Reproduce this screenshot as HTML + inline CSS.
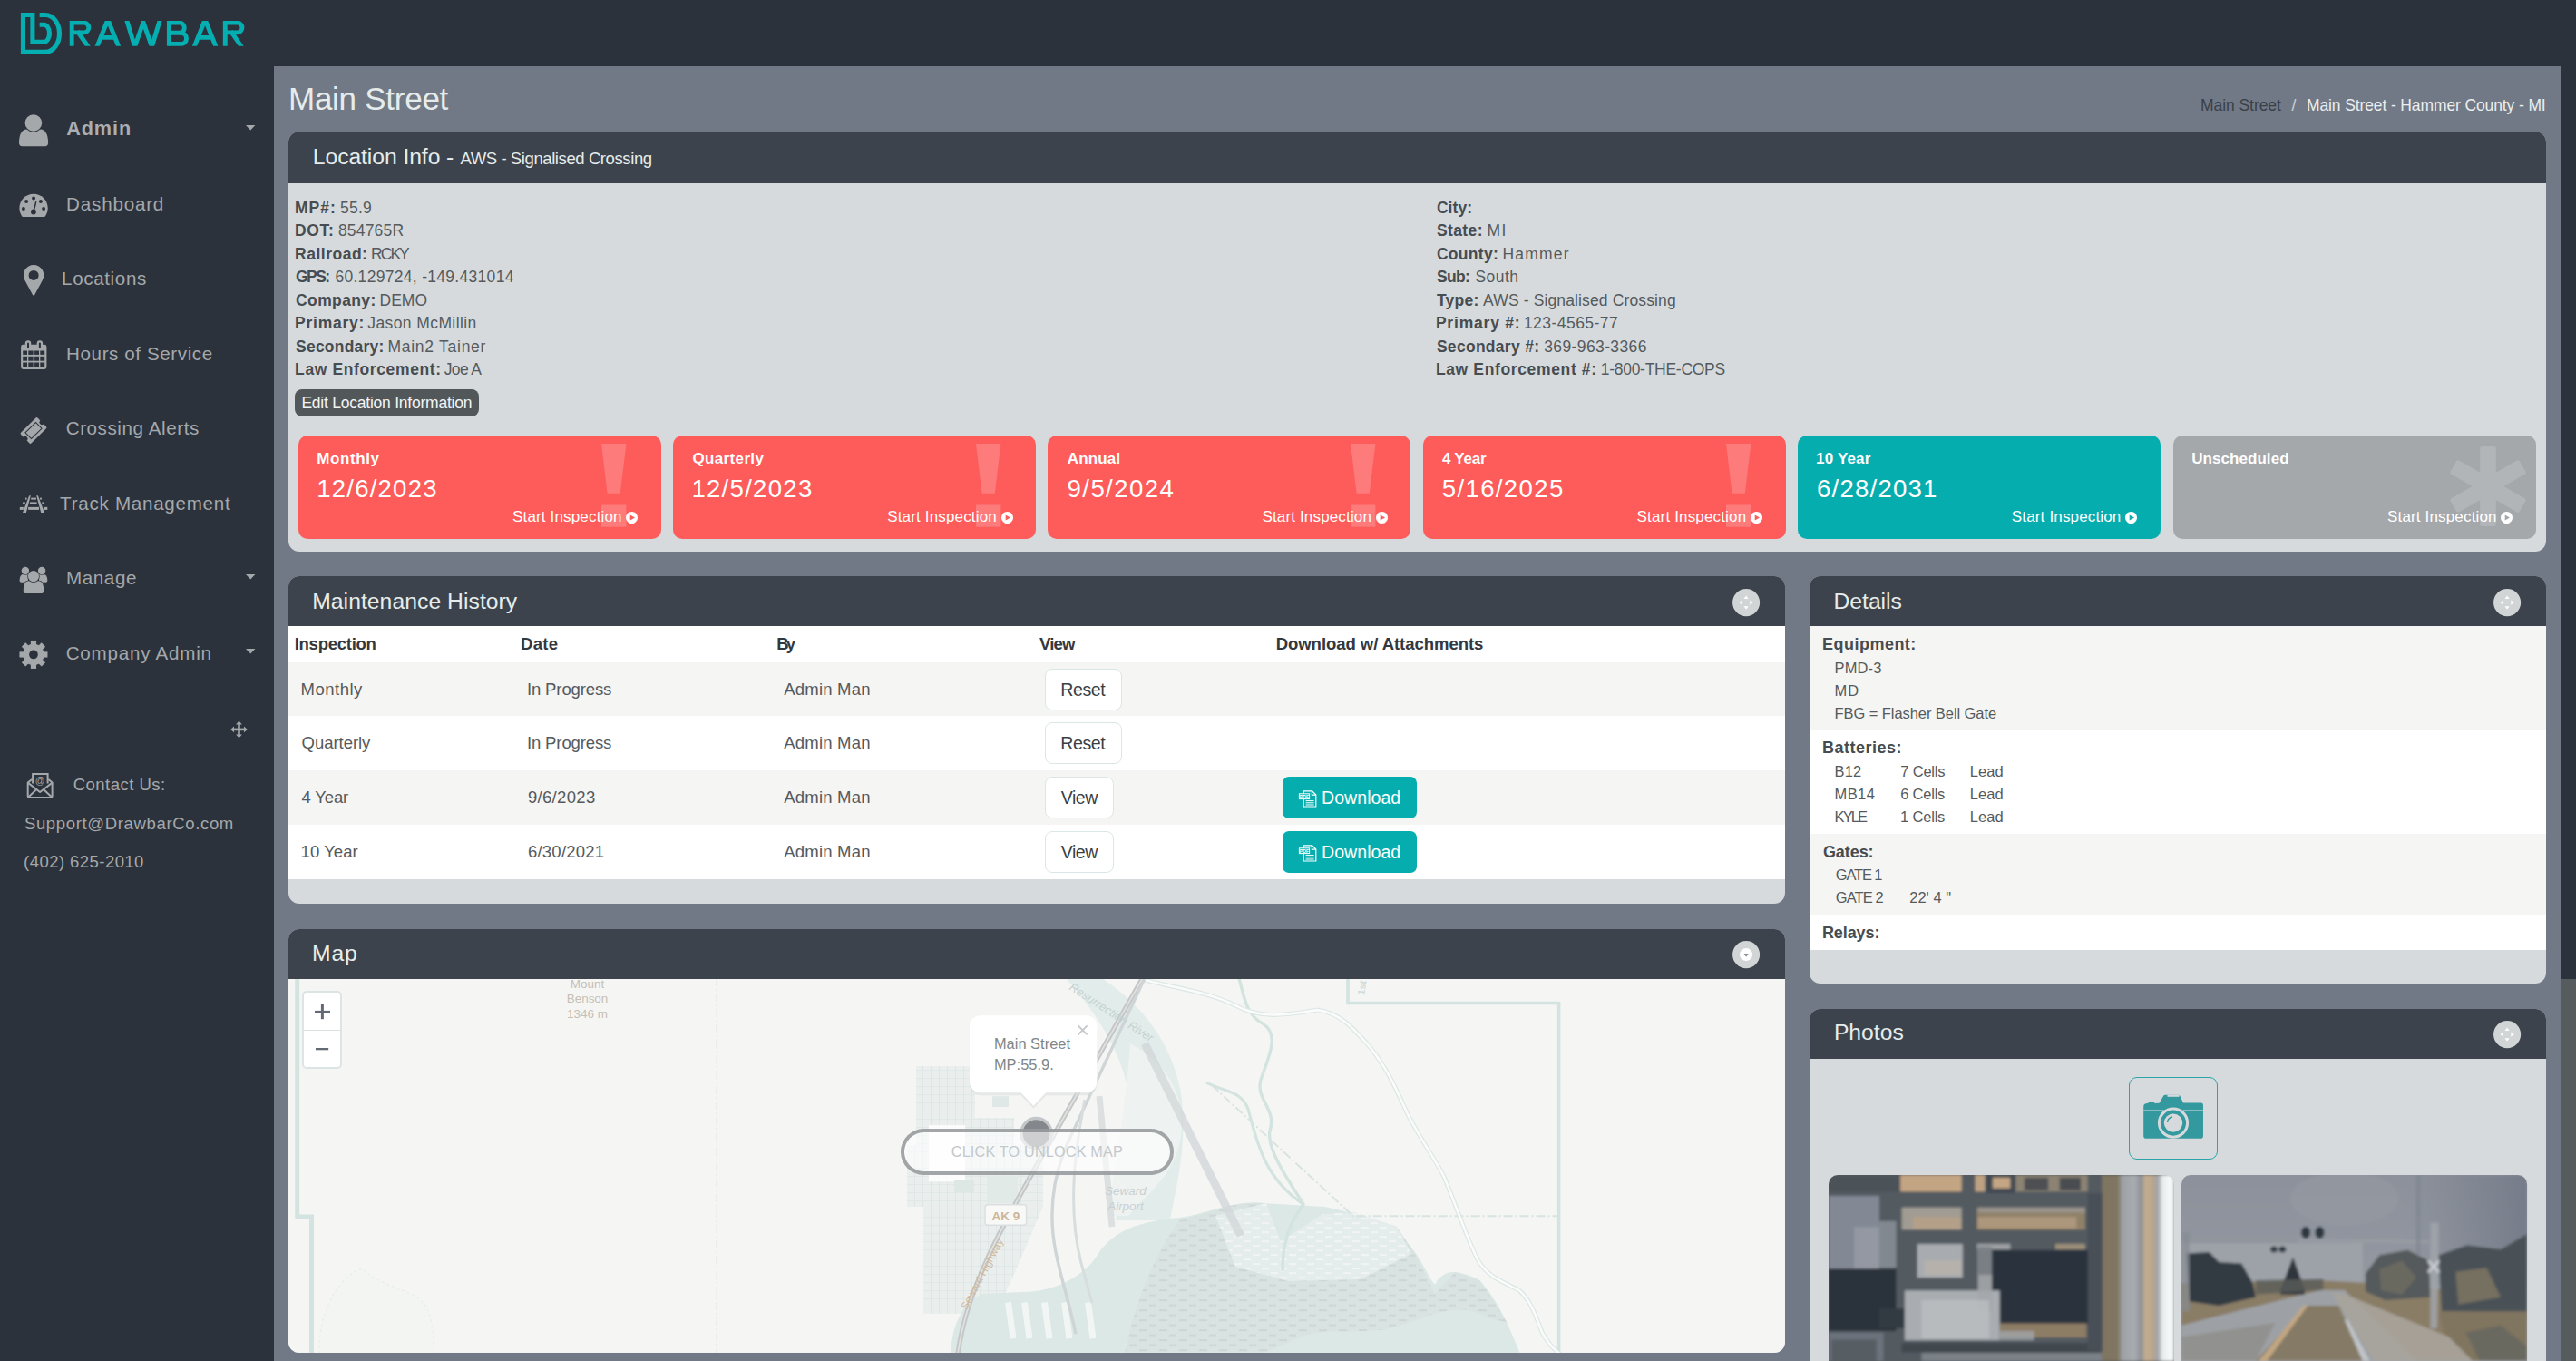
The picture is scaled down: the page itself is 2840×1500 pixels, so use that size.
<!DOCTYPE html>
<html lang="en"><head><meta charset="utf-8"><title>Main Street - Drawbar</title>
<style>
html,body{margin:0;padding:0;}
body{width:2840px;height:1500px;overflow:hidden;background:#2c323b;font-family:"Liberation Sans",sans-serif;position:relative;}
.t{position:absolute;display:block;white-space:pre;line-height:0;font-family:"Liberation Sans",sans-serif;}
.t i{display:inline-block;width:0;height:100px;vertical-align:baseline;}
.a{position:absolute;}
svg{position:absolute;overflow:visible;}

.content{left:302px;top:73px;width:2521px;height:1427px;background:#727986;}
.sbthumb{left:2823px;top:0;width:17px;height:1079px;background:#2c323b;}
.sbtrack{left:2823px;top:1079px;width:17px;height:421px;background:#565b5d;}
.panel{background:#d6dadc;border-radius:12px;overflow:hidden;}
.ph{left:0;top:0;right:0;background:#3c434c;}

.pinfo{left:318px;top:145px;width:2489px;height:463px;}
.pinfo .ph{height:56.5px;}
.card{top:479.8px;width:400px;height:114.1px;border-radius:10px;}
.c-red{background:#fd5c5a;}.c-teal{background:#06adaf;}.c-grey{background:#a5a8ab;}
.editbtn{left:324.8px;top:429px;width:203.2px;height:29.8px;border-radius:8px;background:#525759;}

.pmh{left:318px;top:635px;width:1650px;height:360.5px;}
.pmh .ph{height:55.2px;}
.row{left:318px;width:1650px;}
.btnw{background:#fff;border:1.2px solid #dbe7e5;border-radius:8px;box-sizing:border-box;}
.btnt{background:#06adaf;border-radius:7px;}

.pdet{left:1995px;top:635px;width:811.5px;height:449px;}
.pdet .ph{height:54.8px;}
.drow{left:1995px;width:811.5px;}

.pmap{left:318px;top:1024.4px;width:1650px;height:466.4px;}
.pmap .ph{height:54.5px;}
.zoomc{left:332.6px;top:1092.1px;width:44px;height:86.4px;background:#fff;border:2px solid #dde4e4;border-radius:5px;box-sizing:border-box;}
.pill{left:992.8px;top:1243.8px;width:300.8px;height:50.8px;box-sizing:border-box;border:4.4px solid rgba(128,131,135,0.72);border-radius:26px;background:rgba(255,255,255,0.6);}

.pph{left:1995px;top:1112px;width:811.5px;height:420px;}
.pph .ph{height:55px;}
.cambtn{left:2346.7px;top:1187px;width:98.4px;height:90.9px;border:1.6px solid #2aa5a8;border-radius:9px;box-sizing:border-box;}

</style></head><body>

<div class="a content"></div>
<div class="a sbtrack"></div><div class="a sbthumb"></div>
<span class="t" style="left:318.0px;top:21px;font-size:35.02px;color:#e6eceb;letter-spacing:-0.27px;"><i></i>Main Street</span><span class="t" style="left:2426.0px;top:22px;font-size:17.51px;color:#3a4048;letter-spacing:-0.06px;"><i></i>Main Street</span><span class="t" style="left:2526.5px;top:22px;font-size:17.51px;color:#ccd2d6;"><i></i>/</span><span class="t" style="left:2543.0px;top:22px;font-size:17.51px;color:#e9eeee;letter-spacing:-0.12px;"><i></i>Main Street - Hammer County - MI</span>
<svg style="left:0px;top:0px" width="302" height="73" viewBox="0 0 302 73" ><g fill="none" stroke="#04aeb1" stroke-width="5.1" stroke-linejoin="miter" stroke-linecap="butt"><path d="M43.65,16.56 H49.9 A15.6,20.37 0 0 1 49.9,57.3 H25.45 V16.56 H35.9 V46.3 H48.4 A6.1,9.55 0 0 0 48.4,27.2 H43.65"/></g><clipPath id="capband"><rect x="70" y="22.9" width="210" height="27.9"/></clipPath><g clip-path="url(#capband)" fill="none" stroke="#04aeb1" stroke-width="4.9" stroke-linejoin="miter" stroke-miterlimit="10"><path d="M79.2,20 V54"/><path d="M79.2,25.15 H92.5 A5.35,5.35 0 0 1 92.5,35.85 H79.2"/><path d="M85.4,34.5 L98.9,54"/><path d="M106.05,53.8 L118.90,21.70 L131.75,53.8" stroke-linejoin="bevel"/><path d="M112.40,41.4 H125.40"/><path d="M138.4,18 L148.6,51.5 L158,24.5 L167.4,51.5 L177.6,18" stroke-linejoin="miter"/><path d="M186.4,20 V54"/><path d="M186.4,25.15 H197.9 A5.6,5.58 0 0 1 197.9,36.3 H186.4"/><path d="M197.9,36.3 H199.4 A6.1,6.12 0 0 1 199.4,48.55 H186.4"/><path d="M213.25,53.8 L226.10,21.70 L238.95,53.8" stroke-linejoin="bevel"/><path d="M219.60,41.4 H232.60"/><path d="M248.3,20 V54"/><path d="M248.3,25.15 H261.6 A5.35,5.35 0 0 1 261.6,35.85 H248.3"/><path d="M254.5,34.5 L268.0,54"/></g></svg><svg style="left:18px;top:122px" width="40" height="44" viewBox="18 122 40 44" ><path fill="#a4a8ab" d="M21,157.6 C21,149 23.5,142.4 29.5,142.4 H44.5 C50.5,142.4 53.1,149 53.1,157.6 Q53.1,161.3 49.5,161.3 H24.6 Q21,161.3 21,157.6Z"/><circle cx="36.9" cy="135.5" r="9.3" fill="#a4a8ab" stroke="#2c323b" stroke-width="1.6" paint-order="stroke"/></svg><svg style="left:18px;top:210px" width="40" height="32" viewBox="18 210 40 32" ><clipPath id="dcl"><rect x="18" y="210" width="40" height="29"/></clipPath><circle cx="37.05" cy="229.3" r="15.65" fill="#a4a8ab" clip-path="url(#dcl)"/><circle cx="37.05" cy="218.5" r="2" fill="#2c323b"/><circle cx="29.1" cy="222" r="2" fill="#2c323b"/><circle cx="44.9" cy="222" r="2" fill="#2c323b"/><circle cx="25.9" cy="230" r="2" fill="#2c323b"/><circle cx="48.1" cy="230" r="2" fill="#2c323b"/><circle cx="36.9" cy="233.5" r="2.9" fill="#2c323b"/><path d="M36.9,233.5 L39.8,222.3" stroke="#2c323b" stroke-width="1.5"/></svg><svg style="left:20px;top:288px" width="36" height="42" viewBox="20 288 36 42" ><path fill="#a4a8ab" fill-rule="evenodd" d="M27.30,308.63 A11.2,11.2 0 1 1 46.90,308.63 L38.30,324.70 Q37.1,326.90000000000003 35.90,324.70 Z M42.6,303.4 a5.5,5.5 0 1 0 -11,0 a5.5,5.5 0 1 0 11,0Z"/></svg><svg style="left:20px;top:372px" width="36" height="38" viewBox="20 372 36 38" ><rect x="23.1" y="379.8" width="28.3" height="27.2" rx="2.4" fill="#a4a8ab"/><rect x="27.8" y="375.2" width="6.4" height="9.4" rx="3" fill="#a4a8ab"/><rect x="30.0" y="377.4" width="2" height="6.4" rx="1" fill="#2c323b"/><rect x="40.7" y="375.2" width="6.4" height="9.4" rx="3" fill="#a4a8ab"/><rect x="42.900000000000006" y="377.4" width="2" height="6.4" rx="1" fill="#2c323b"/><rect x="25.2" y="386.5" width="4.8" height="4.4" fill="#2c323b"/><rect x="25.2" y="392.8" width="4.8" height="4.9" fill="#2c323b"/><rect x="25.2" y="399.5" width="4.8" height="4.6" fill="#2c323b"/><rect x="31.3" y="386.5" width="5.3" height="4.4" fill="#2c323b"/><rect x="31.3" y="392.8" width="5.3" height="4.9" fill="#2c323b"/><rect x="31.3" y="399.5" width="5.3" height="4.6" fill="#2c323b"/><rect x="38.1" y="386.5" width="4.9" height="4.4" fill="#2c323b"/><rect x="38.1" y="392.8" width="4.9" height="4.9" fill="#2c323b"/><rect x="38.1" y="399.5" width="4.9" height="4.6" fill="#2c323b"/><rect x="44.3" y="386.5" width="4.9" height="4.4" fill="#2c323b"/><rect x="44.3" y="392.8" width="4.9" height="4.9" fill="#2c323b"/><rect x="44.3" y="399.5" width="4.9" height="4.6" fill="#2c323b"/></svg><svg style="left:18px;top:455px" width="40" height="40" viewBox="18 455 40 40" ><g transform="translate(37,474.5) rotate(-44.5)"><path fill="#a4a8ab" d="M-11.549999999999999,-8.15 H11.549999999999999 Q12.95,-8.15 12.95,-6.75 V-2.7 A2.7,2.7 0 0 0 12.95,2.7 V6.75 Q12.95,8.15 11.549999999999999,8.15 H-11.549999999999999 Q-12.95,8.15 -12.95,6.75 V2.7 A2.7,2.7 0 0 0 -12.95,-2.7 V-6.75 Q-12.95,-8.15 -11.549999999999999,-8.15Z"/><rect x="-8.1" y="-4.7" width="16.2" height="9.4" fill="none" stroke="#2c323b" stroke-width="1"/></g></svg><svg style="left:18px;top:542px" width="40" height="28" viewBox="18 542 40 28" ><g fill="#a4a8ab"><polygon points="32.2,546.2 33.8,546.2 28.9,565.1 25.0,565.1"/><polygon points="40.2,546.2 41.9,546.2 49.0,565.1 45.2,565.1"/><rect x="34.2" y="548.6" width="5.7" height="2.0"/><rect x="28" y="548.6" width="1.6" height="2.0"/><rect x="44.1" y="548.6" width="1.8" height="2.0"/><rect x="32.9" y="553.4" width="7.7" height="2.2"/><rect x="25.1" y="553.4" width="2.7" height="2.2"/><rect x="46.3" y="553.4" width="2.7" height="2.2"/><rect x="31.1" y="558.9" width="11.9" height="3.0"/><rect x="21.8" y="558.9" width="4.0" height="3.0"/><rect x="48.3" y="558.9" width="4.0" height="3.0"/></g></svg><svg style="left:18px;top:622px" width="40" height="36" viewBox="18 622 40 36" ><path fill="#a4a8ab" stroke="#2c323b" stroke-width="1.4" paint-order="stroke" d="M21.6,640 C21.6,635.5 23,632.9 26,632.9 H31 V641.7 H23.4 Q21.6,641.7 21.6,640Z"/><path fill="#a4a8ab" stroke="#2c323b" stroke-width="1.4" paint-order="stroke" d="M52.3,640 C52.3,635.5 50.9,632.9 47.9,632.9 H42.9 V641.7 H50.5 Q52.3,641.7 52.3,640Z"/><circle cx="27.9" cy="628.95" r="4.2" fill="#a4a8ab" stroke="#2c323b" stroke-width="1.4" paint-order="stroke"/><circle cx="46.1" cy="628.95" r="4.2" fill="#a4a8ab" stroke="#2c323b" stroke-width="1.4" paint-order="stroke"/><path fill="#a4a8ab" stroke="#2c323b" stroke-width="1.4" paint-order="stroke" d="M25.8,651 C25.8,645 27.5,640.3 31.5,640.3 H42.5 C46.5,640.3 48.3,645 48.3,651 Q48.3,654.1 45.2,654.1 H28.9 Q25.8,654.1 25.8,651Z"/><circle cx="36.95" cy="635.1" r="6.1" fill="#a4a8ab" stroke="#2c323b" stroke-width="1.4" paint-order="stroke"/></svg><svg style="left:18px;top:702px" width="40" height="40" viewBox="18 702 40 40" ><g transform="translate(36.96,721.45)" fill="#a4a8ab"><circle r="11.6"/><rect x="-3.1" y="-15.5" width="6.2" height="8" transform="rotate(0)"/><rect x="-3.1" y="-15.5" width="6.2" height="8" transform="rotate(45)"/><rect x="-3.1" y="-15.5" width="6.2" height="8" transform="rotate(90)"/><rect x="-3.1" y="-15.5" width="6.2" height="8" transform="rotate(135)"/><rect x="-3.1" y="-15.5" width="6.2" height="8" transform="rotate(180)"/><rect x="-3.1" y="-15.5" width="6.2" height="8" transform="rotate(225)"/><rect x="-3.1" y="-15.5" width="6.2" height="8" transform="rotate(270)"/><rect x="-3.1" y="-15.5" width="6.2" height="8" transform="rotate(315)"/><circle r="4.85" fill="#2c323b"/></g></svg><svg style="left:252px;top:792px" width="24" height="24" viewBox="252 792 24 24" ><g transform="translate(263.5,803.9)" fill="#a4a8ab"><rect x="-6" y="-1.3" width="12" height="2.6"/><rect x="-1.3" y="-6" width="2.6" height="12"/><polygon points="0,-9.3 3.4,-5.5 -3.4,-5.5" transform="rotate(0)"/><polygon points="0,-9.3 3.4,-5.5 -3.4,-5.5" transform="rotate(90)"/><polygon points="0,-9.3 3.4,-5.5 -3.4,-5.5" transform="rotate(180)"/><polygon points="0,-9.3 3.4,-5.5 -3.4,-5.5" transform="rotate(270)"/></g></svg><svg style="left:26px;top:848px" width="36" height="36" viewBox="26 848 36 36" ><g fill="none" stroke="#a4a8ab" stroke-width="2" stroke-linejoin="round"><path d="M35.2,859 L30.7,862.6 V877 Q30.7,879 32.7,879 H55.6 Q57.6,879 57.6,877 V862.6 L53.4,859"/><path d="M36.1,863.5 V852.9 H52.6 V863.5" stroke-linejoin="miter"/><path d="M31,862.9 L44.1,873 L57.3,862.9"/><path d="M31.6,878.3 L40,870.3 M56.8,878.3 L48.3,870.3"/></g><text x="44.1" y="864.3" font-family="Liberation Sans" font-size="10.5" fill="#a4a8ab" text-anchor="middle">@</text></svg><span class="t" style="left:73.2px;top:49px;font-size:21.63px;color:#abaeb2;font-weight:700;letter-spacing:0.91px;"><i></i>Admin</span><svg style="left:270.8px;top:137.9px" width="10.4" height="5.4" viewBox="0 0 10.4 5.4"><polygon points="0,0 10.4,0 5.2,5.4" fill="#a4a8ab"/></svg><span class="t" style="left:73.1px;top:132px;font-size:20.6px;color:#a4a8ab;letter-spacing:0.81px;"><i></i>Dashboard</span><span class="t" style="left:68.1px;top:214px;font-size:20.6px;color:#a4a8ab;letter-spacing:0.63px;"><i></i>Locations</span><span class="t" style="left:73.1px;top:297px;font-size:20.6px;color:#a4a8ab;letter-spacing:0.59px;"><i></i>Hours of Service</span><span class="t" style="left:72.7px;top:379px;font-size:20.6px;color:#a4a8ab;letter-spacing:0.58px;"><i></i>Crossing Alerts</span><span class="t" style="left:66.1px;top:462px;font-size:20.6px;color:#a4a8ab;letter-spacing:0.73px;"><i></i>Track Management</span><span class="t" style="left:73.1px;top:544px;font-size:20.6px;color:#a4a8ab;letter-spacing:0.57px;"><i></i>Manage</span><svg style="left:270.8px;top:632.7px" width="10.4" height="5.4" viewBox="0 0 10.4 5.4"><polygon points="0,0 10.4,0 5.2,5.4" fill="#a4a8ab"/></svg><span class="t" style="left:72.7px;top:627px;font-size:20.6px;color:#a4a8ab;letter-spacing:0.77px;"><i></i>Company Admin</span><svg style="left:270.8px;top:714.9px" width="10.4" height="5.4" viewBox="0 0 10.4 5.4"><polygon points="0,0 10.4,0 5.2,5.4" fill="#a4a8ab"/></svg><span class="t" style="left:80.7px;top:771px;font-size:18.54px;color:#a4a8ab;letter-spacing:0.46px;"><i></i>Contact Us:</span><span class="t" style="left:26.9px;top:814px;font-size:18.54px;color:#a4a8ab;letter-spacing:0.64px;"><i></i>Support@DrawbarCo.com</span><span class="t" style="left:26.1px;top:856px;font-size:18.54px;color:#a4a8ab;letter-spacing:0.43px;"><i></i>(402) 625-2010</span>
<div class="a panel pinfo"><div class="a ph"></div></div><span class="t" style="left:344.8px;top:81px;font-size:24.72px;color:#e6eceb;letter-spacing:-0.08px;"><i></i>Location Info -</span><span class="t" style="left:507.4px;top:81px;font-size:18.54px;color:#e6eceb;letter-spacing:-0.42px;"><i></i>AWS - Signalised Crossing</span><span class="t" style="left:325.1px;top:135px;font-size:17.51px;color:#474c50;font-weight:700;letter-spacing:0.94px;"><i></i>MP#:</span><span class="t" style="left:374.9px;top:135px;font-size:17.51px;color:#555a5e;letter-spacing:0.26px;"><i></i>55.9</span><span class="t" style="left:325.1px;top:160px;font-size:17.51px;color:#474c50;font-weight:700;letter-spacing:0.63px;"><i></i>DOT:</span><span class="t" style="left:372.9px;top:160px;font-size:17.51px;color:#555a5e;letter-spacing:0.20px;"><i></i>854765R</span><span class="t" style="left:325.1px;top:186px;font-size:17.51px;color:#474c50;font-weight:700;letter-spacing:0.50px;"><i></i>Railroad:</span><span class="t" style="left:409.1px;top:186px;font-size:17.51px;color:#555a5e;letter-spacing:-1.98px;"><i></i>RCKY</span><span class="t" style="left:326.1px;top:211px;font-size:17.51px;color:#474c50;font-weight:700;letter-spacing:-1.59px;"><i></i>GPS:</span><span class="t" style="left:369.4px;top:211px;font-size:17.51px;color:#555a5e;letter-spacing:0.30px;"><i></i>60.129724, -149.431014</span><span class="t" style="left:326.1px;top:237px;font-size:17.51px;color:#474c50;font-weight:700;letter-spacing:0.37px;"><i></i>Company:</span><span class="t" style="left:418.5px;top:237px;font-size:17.51px;color:#555a5e;"><i></i>DEMO</span><span class="t" style="left:325.1px;top:262px;font-size:17.51px;color:#474c50;font-weight:700;letter-spacing:0.73px;"><i></i>Primary:</span><span class="t" style="left:405.3px;top:262px;font-size:17.51px;color:#555a5e;letter-spacing:0.40px;"><i></i>Jason McMillin</span><span class="t" style="left:326.1px;top:288px;font-size:17.51px;color:#474c50;font-weight:700;letter-spacing:0.21px;"><i></i>Secondary:</span><span class="t" style="left:427.4px;top:288px;font-size:17.51px;color:#555a5e;letter-spacing:0.74px;"><i></i>Main2 Tainer</span><span class="t" style="left:325.1px;top:313px;font-size:17.51px;color:#474c50;font-weight:700;letter-spacing:0.62px;"><i></i>Law Enforcement:</span><span class="t" style="left:489.8px;top:313px;font-size:17.51px;color:#555a5e;letter-spacing:-0.69px;"><i></i>Joe A</span><span class="t" style="left:1583.9px;top:135px;font-size:17.51px;color:#474c50;font-weight:700;letter-spacing:0.06px;"><i></i>City:</span><span class="t" style="left:1583.9px;top:160px;font-size:17.51px;color:#474c50;font-weight:700;letter-spacing:0.40px;"><i></i>State:</span><span class="t" style="left:1639.5px;top:160px;font-size:17.51px;color:#555a5e;letter-spacing:1.32px;"><i></i>MI</span><span class="t" style="left:1583.9px;top:186px;font-size:17.51px;color:#474c50;font-weight:700;letter-spacing:0.31px;"><i></i>County:</span><span class="t" style="left:1656.4px;top:186px;font-size:17.51px;color:#555a5e;letter-spacing:1.21px;"><i></i>Hammer</span><span class="t" style="left:1583.9px;top:211px;font-size:17.51px;color:#474c50;font-weight:700;letter-spacing:-0.68px;"><i></i>Sub:</span><span class="t" style="left:1626.4px;top:211px;font-size:17.51px;color:#555a5e;letter-spacing:0.48px;"><i></i>South</span><span class="t" style="left:1583.9px;top:237px;font-size:17.51px;color:#474c50;font-weight:700;letter-spacing:0.29px;"><i></i>Type:</span><span class="t" style="left:1635.1px;top:237px;font-size:17.51px;color:#555a5e;letter-spacing:0.13px;"><i></i>AWS - Signalised Crossing</span><span class="t" style="left:1582.9px;top:262px;font-size:17.51px;color:#474c50;font-weight:700;letter-spacing:0.80px;"><i></i>Primary #:</span><span class="t" style="left:1679.9px;top:262px;font-size:17.51px;color:#555a5e;letter-spacing:0.46px;"><i></i>123-4565-77</span><span class="t" style="left:1583.9px;top:288px;font-size:17.51px;color:#474c50;font-weight:700;letter-spacing:0.29px;"><i></i>Secondary #:</span><span class="t" style="left:1702.2px;top:288px;font-size:17.51px;color:#555a5e;letter-spacing:0.39px;"><i></i>369-963-3366</span><span class="t" style="left:1582.9px;top:313px;font-size:17.51px;color:#474c50;font-weight:700;letter-spacing:0.64px;"><i></i>Law Enforcement #:</span><span class="t" style="left:1764.7px;top:313px;font-size:17.51px;color:#555a5e;letter-spacing:-0.27px;"><i></i>1-800-THE-COPS</span><div class="a editbtn"></div><span class="t" style="left:332.4px;top:350px;font-size:17.51px;color:#f2f4f4;letter-spacing:-0.23px;"><i></i>Edit Location Information</span><div class="a card c-red" style="left:329.0px"></div><svg style="left:663.0px;top:488.8px" width="27.4" height="92" viewBox="0 0 27.4 92"><g fill="#fff" fill-opacity="0.2"><polygon points="0,0 27.4,0 20.8,54.8 6.6,54.8"/><rect x="0" y="67.5" width="27.4" height="24.2"/></g></svg><span class="t" style="left:349.3px;top:411px;font-size:17.0px;color:#fff;font-weight:700;letter-spacing:0.58px;"><i></i>Monthly</span><span class="t" style="left:349.2px;top:448px;font-size:27.6px;color:#fff;letter-spacing:1.20px;"><i></i>12/6/2023</span><span class="t" style="left:565.0px;top:475px;font-size:17.0px;color:#fff;letter-spacing:0.16px;"><i></i>Start Inspection</span><svg style="left:690.4px;top:563.9px" width="13" height="13" viewBox="0 0 13 13"><path fill="#fff" fill-rule="evenodd" d="M6.5,0 a6.5,6.5 0 1 0 0.001,0Z M4.7,3.4 V9.6 L10,6.5Z"/></svg><div class="a card c-red" style="left:742.2px"></div><svg style="left:1076.2px;top:488.8px" width="27.4" height="92" viewBox="0 0 27.4 92"><g fill="#fff" fill-opacity="0.2"><polygon points="0,0 27.4,0 20.8,54.8 6.6,54.8"/><rect x="0" y="67.5" width="27.4" height="24.2"/></g></svg><span class="t" style="left:763.5px;top:411px;font-size:17.0px;color:#fff;font-weight:700;letter-spacing:0.35px;"><i></i>Quarterly</span><span class="t" style="left:762.4px;top:448px;font-size:27.6px;color:#fff;letter-spacing:1.26px;"><i></i>12/5/2023</span><span class="t" style="left:978.2px;top:475px;font-size:17.0px;color:#fff;letter-spacing:0.16px;"><i></i>Start Inspection</span><svg style="left:1103.6px;top:563.9px" width="13" height="13" viewBox="0 0 13 13"><path fill="#fff" fill-rule="evenodd" d="M6.5,0 a6.5,6.5 0 1 0 0.001,0Z M4.7,3.4 V9.6 L10,6.5Z"/></svg><div class="a card c-red" style="left:1155.4px"></div><svg style="left:1489.4px;top:488.8px" width="27.4" height="92" viewBox="0 0 27.4 92"><g fill="#fff" fill-opacity="0.2"><polygon points="0,0 27.4,0 20.8,54.8 6.6,54.8"/><rect x="0" y="67.5" width="27.4" height="24.2"/></g></svg><span class="t" style="left:1176.7px;top:411px;font-size:17.0px;color:#fff;font-weight:700;letter-spacing:0.18px;"><i></i>Annual</span><span class="t" style="left:1176.6px;top:448px;font-size:27.6px;color:#fff;letter-spacing:1.39px;"><i></i>9/5/2024</span><span class="t" style="left:1391.4px;top:475px;font-size:17.0px;color:#fff;letter-spacing:0.16px;"><i></i>Start Inspection</span><svg style="left:1516.8000000000002px;top:563.9px" width="13" height="13" viewBox="0 0 13 13"><path fill="#fff" fill-rule="evenodd" d="M6.5,0 a6.5,6.5 0 1 0 0.001,0Z M4.7,3.4 V9.6 L10,6.5Z"/></svg><div class="a card c-red" style="left:1568.6px"></div><svg style="left:1902.6px;top:488.8px" width="27.4" height="92" viewBox="0 0 27.4 92"><g fill="#fff" fill-opacity="0.2"><polygon points="0,0 27.4,0 20.8,54.8 6.6,54.8"/><rect x="0" y="67.5" width="27.4" height="24.2"/></g></svg><span class="t" style="left:1589.9px;top:411px;font-size:17.0px;color:#fff;font-weight:700;letter-spacing:-0.22px;"><i></i>4 Year</span><span class="t" style="left:1589.8px;top:448px;font-size:27.6px;color:#fff;letter-spacing:1.34px;"><i></i>5/16/2025</span><span class="t" style="left:1804.6px;top:475px;font-size:17.0px;color:#fff;letter-spacing:0.16px;"><i></i>Start Inspection</span><svg style="left:1930.0px;top:563.9px" width="13" height="13" viewBox="0 0 13 13"><path fill="#fff" fill-rule="evenodd" d="M6.5,0 a6.5,6.5 0 1 0 0.001,0Z M4.7,3.4 V9.6 L10,6.5Z"/></svg><div class="a card c-teal" style="left:1981.8px"></div><span class="t" style="left:2002.1px;top:411px;font-size:17.0px;color:#fff;font-weight:700;letter-spacing:0.16px;"><i></i>10 Year</span><span class="t" style="left:2003.0px;top:448px;font-size:27.6px;color:#fff;letter-spacing:1.21px;"><i></i>6/28/2031</span><span class="t" style="left:2217.8px;top:475px;font-size:17.0px;color:#fff;letter-spacing:0.16px;"><i></i>Start Inspection</span><svg style="left:2343.2px;top:563.9px" width="13" height="13" viewBox="0 0 13 13"><path fill="#fff" fill-rule="evenodd" d="M6.5,0 a6.5,6.5 0 1 0 0.001,0Z M4.7,3.4 V9.6 L10,6.5Z"/></svg><div class="a card c-grey" style="left:2396.0px"></div><svg style="left:2692.7px;top:485.9px" width="100" height="100" viewBox="-50 -50 100 100"><g fill="#b2b5b8"><rect x="-8.8" y="-44" width="17.6" height="88" rx="2.5" transform="rotate(0)"/><rect x="-8.8" y="-44" width="17.6" height="88" rx="2.5" transform="rotate(60)"/><rect x="-8.8" y="-44" width="17.6" height="88" rx="2.5" transform="rotate(120)"/></g></svg><span class="t" style="left:2416.3px;top:411px;font-size:17.0px;color:#fff;font-weight:700;letter-spacing:0.05px;"><i></i>Unscheduled</span><span class="t" style="left:2632.0px;top:475px;font-size:17.0px;color:#fff;letter-spacing:0.16px;"><i></i>Start Inspection</span><svg style="left:2757.4px;top:563.9px" width="13" height="13" viewBox="0 0 13 13"><path fill="#fff" fill-rule="evenodd" d="M6.5,0 a6.5,6.5 0 1 0 0.001,0Z M4.7,3.4 V9.6 L10,6.5Z"/></svg>
<div class="a panel pmh"><div class="a ph"></div></div><span class="t" style="left:344.2px;top:571px;font-size:24.72px;color:#e6eceb;letter-spacing:0.04px;"><i></i>Maintenance History</span><svg style="left:1909.8500000000001px;top:648.9px" width="30.2" height="30.2" viewBox="-15.1 -15.1 30.2 30.2"><circle r="15.05" fill="#d2d5d6"/><polygon points="0,-7.6 2.6,-4.2 -2.6,-4.2" fill="#fff" transform="rotate(0)"/><polygon points="0,-7.6 2.6,-4.2 -2.6,-4.2" fill="#fff" transform="rotate(90)"/><polygon points="0,-7.6 2.6,-4.2 -2.6,-4.2" fill="#fff" transform="rotate(180)"/><polygon points="0,-7.6 2.6,-4.2 -2.6,-4.2" fill="#fff" transform="rotate(270)"/></svg><div class="a row" style="top:690.2px;height:39.9px;background:#fff"></div><div class="a row" style="top:730.0px;height:60.1px;background:#f5f5f3"></div><div class="a row" style="top:789.0px;height:60.1px;background:#fff"></div><div class="a row" style="top:849.0px;height:60.1px;background:#f5f5f3"></div><div class="a row" style="top:909.0px;height:60.1px;background:#fff"></div><span class="t" style="left:324.7px;top:616px;font-size:18.54px;color:#33383e;font-weight:700;letter-spacing:-0.27px;"><i></i>Inspection</span><span class="t" style="left:574.0px;top:616px;font-size:18.54px;color:#33383e;font-weight:700;letter-spacing:0.28px;"><i></i>Date</span><span class="t" style="left:856.3px;top:616px;font-size:18.54px;color:#33383e;font-weight:700;letter-spacing:-2.88px;"><i></i>By</span><span class="t" style="left:1145.9px;top:616px;font-size:18.54px;color:#33383e;font-weight:700;letter-spacing:-0.79px;"><i></i>View</span><span class="t" style="left:1406.7px;top:616px;font-size:18.54px;color:#33383e;font-weight:700;letter-spacing:-0.06px;"><i></i>Download w/ Attachments</span><span class="t" style="left:331.6px;top:666px;font-size:18.54px;color:#555a5e;letter-spacing:0.46px;"><i></i>Monthly</span><span class="t" style="left:580.9px;top:666px;font-size:18.54px;color:#555a5e;letter-spacing:-0.13px;"><i></i>In Progress</span><span class="t" style="left:864.2px;top:666px;font-size:18.54px;color:#555a5e;letter-spacing:0.21px;"><i></i>Admin Man</span><div class="a btnw" style="left:1152.1px;top:737.2px;width:84.6px;height:45.4px"></div><span class="t" style="left:1169.3px;top:667px;font-size:19.57px;color:#3a3f44;letter-spacing:-0.44px;"><i></i>Reset</span><span class="t" style="left:332.6px;top:725px;font-size:18.54px;color:#555a5e;letter-spacing:-0.06px;"><i></i>Quarterly</span><span class="t" style="left:580.9px;top:725px;font-size:18.54px;color:#555a5e;letter-spacing:-0.13px;"><i></i>In Progress</span><span class="t" style="left:864.2px;top:725px;font-size:18.54px;color:#555a5e;letter-spacing:0.21px;"><i></i>Admin Man</span><div class="a btnw" style="left:1152.1px;top:796.2px;width:84.6px;height:45.4px"></div><span class="t" style="left:1169.3px;top:726px;font-size:19.57px;color:#3a3f44;letter-spacing:-0.44px;"><i></i>Reset</span><span class="t" style="left:332.6px;top:785px;font-size:18.54px;color:#555a5e;letter-spacing:-0.19px;"><i></i>4 Year</span><span class="t" style="left:581.9px;top:785px;font-size:18.54px;color:#555a5e;letter-spacing:0.31px;"><i></i>9/6/2023</span><span class="t" style="left:864.2px;top:785px;font-size:18.54px;color:#555a5e;letter-spacing:0.21px;"><i></i>Admin Man</span><div class="a btnw" style="left:1152.1px;top:856.2px;width:76.4px;height:45.4px"></div><span class="t" style="left:1169.8px;top:786px;font-size:19.57px;color:#3a3f44;letter-spacing:-0.51px;"><i></i>View</span><div class="a btnt" style="left:1413.9px;top:855.9px;width:148px;height:46px"></div><svg style="left:1431.8px;top:871.4000000000001px" width="20" height="19" viewBox="0 0 20 19"><g fill="none" stroke="#fff" stroke-width="1.2"><path d="M5.2,4.2 V0.8 H14.6 L18.8,5 V18 H5.2 V10"/><path d="M14.4,0.9 V5.2 H18.7"/><path d="M7.6,11.6 H16.6 M7.6,13.8 H16.6 M7.6,16 H16.6" stroke-width="1"/></g><rect x="0.4" y="3.8" width="11.2" height="5.8" fill="#06adaf" stroke="#fff" stroke-width="1"/><text x="6" y="8.6" font-family="Liberation Sans" font-weight="700" font-size="5.2" fill="#fff" text-anchor="middle">PDF</text></svg><span class="t" style="left:1457.1px;top:786px;font-size:19.57px;color:#fff;letter-spacing:0.01px;"><i></i>Download</span><span class="t" style="left:331.6px;top:845px;font-size:18.54px;color:#555a5e;letter-spacing:0.04px;"><i></i>10 Year</span><span class="t" style="left:581.9px;top:845px;font-size:18.54px;color:#555a5e;letter-spacing:0.23px;"><i></i>6/30/2021</span><span class="t" style="left:864.2px;top:845px;font-size:18.54px;color:#555a5e;letter-spacing:0.21px;"><i></i>Admin Man</span><div class="a btnw" style="left:1152.1px;top:916.2px;width:76.4px;height:45.4px"></div><span class="t" style="left:1169.8px;top:846px;font-size:19.57px;color:#3a3f44;letter-spacing:-0.51px;"><i></i>View</span><div class="a btnt" style="left:1413.9px;top:915.9px;width:148px;height:46px"></div><svg style="left:1431.8px;top:931.4000000000001px" width="20" height="19" viewBox="0 0 20 19"><g fill="none" stroke="#fff" stroke-width="1.2"><path d="M5.2,4.2 V0.8 H14.6 L18.8,5 V18 H5.2 V10"/><path d="M14.4,0.9 V5.2 H18.7"/><path d="M7.6,11.6 H16.6 M7.6,13.8 H16.6 M7.6,16 H16.6" stroke-width="1"/></g><rect x="0.4" y="3.8" width="11.2" height="5.8" fill="#06adaf" stroke="#fff" stroke-width="1"/><text x="6" y="8.6" font-family="Liberation Sans" font-weight="700" font-size="5.2" fill="#fff" text-anchor="middle">PDF</text></svg><span class="t" style="left:1457.1px;top:846px;font-size:19.57px;color:#fff;letter-spacing:0.01px;"><i></i>Download</span>
<div class="a panel pdet"><div class="a ph"></div></div><span class="t" style="left:2021.5px;top:571px;font-size:24.72px;color:#e6eceb;letter-spacing:-0.03px;"><i></i>Details</span><svg style="left:2748.9px;top:648.8px" width="30.2" height="30.2" viewBox="-15.1 -15.1 30.2 30.2"><circle r="15.05" fill="#d2d5d6"/><polygon points="0,-7.6 2.6,-4.2 -2.6,-4.2" fill="#fff" transform="rotate(0)"/><polygon points="0,-7.6 2.6,-4.2 -2.6,-4.2" fill="#fff" transform="rotate(90)"/><polygon points="0,-7.6 2.6,-4.2 -2.6,-4.2" fill="#fff" transform="rotate(180)"/><polygon points="0,-7.6 2.6,-4.2 -2.6,-4.2" fill="#fff" transform="rotate(270)"/></svg><div class="a drow" style="top:689.8px;height:115.1px;background:#f5f5f3"></div><div class="a drow" style="top:804.9px;height:114.3px;background:#fff"></div><div class="a drow" style="top:919.2px;height:88.7px;background:#f5f5f3"></div><div class="a drow" style="top:1007.9px;height:38.8px;background:#fff"></div><span class="t" style="left:2009.1px;top:616px;font-size:18.03px;color:#474c50;font-weight:700;letter-spacing:0.46px;"><i></i>Equipment:</span><span class="t" style="left:2022.6px;top:642px;font-size:16.48px;color:#555a5e;letter-spacing:0.13px;"><i></i>PMD-3</span><span class="t" style="left:2022.6px;top:667px;font-size:16.48px;color:#555a5e;letter-spacing:0.88px;"><i></i>MD</span><span class="t" style="left:2022.6px;top:692px;font-size:16.48px;color:#555a5e;letter-spacing:-0.06px;"><i></i>FBG = Flasher Bell Gate</span><span class="t" style="left:2009.1px;top:730px;font-size:18.03px;color:#474c50;font-weight:700;letter-spacing:0.49px;"><i></i>Batteries:</span><span class="t" style="left:2022.6px;top:756px;font-size:16.48px;color:#555a5e;letter-spacing:0.13px;"><i></i>B12</span><span class="t" style="left:2095.3px;top:756px;font-size:16.48px;color:#555a5e;letter-spacing:-0.18px;"><i></i>7 Cells</span><span class="t" style="left:2171.7px;top:756px;font-size:16.48px;color:#555a5e;letter-spacing:0.11px;"><i></i>Lead</span><span class="t" style="left:2022.6px;top:781px;font-size:16.48px;color:#555a5e;letter-spacing:0.41px;"><i></i>MB14</span><span class="t" style="left:2095.2px;top:781px;font-size:16.48px;color:#555a5e;letter-spacing:-0.20px;"><i></i>6 Cells</span><span class="t" style="left:2171.7px;top:781px;font-size:16.48px;color:#555a5e;letter-spacing:0.11px;"><i></i>Lead</span><span class="t" style="left:2022.6px;top:806px;font-size:16.48px;color:#555a5e;letter-spacing:-1.88px;"><i></i>KYLE</span><span class="t" style="left:2095.1px;top:806px;font-size:16.48px;color:#555a5e;letter-spacing:-0.18px;"><i></i>1 Cells</span><span class="t" style="left:2171.7px;top:806px;font-size:16.48px;color:#555a5e;letter-spacing:0.11px;"><i></i>Lead</span><span class="t" style="left:2009.9px;top:845px;font-size:18.03px;color:#474c50;font-weight:700;letter-spacing:-0.07px;"><i></i>Gates:</span><span class="t" style="left:2023.7px;top:870px;font-size:16.48px;color:#555a5e;letter-spacing:-1.12px;"><i></i>GATE 1</span><span class="t" style="left:2023.7px;top:895px;font-size:16.48px;color:#555a5e;letter-spacing:-0.86px;"><i></i>GATE 2</span><span class="t" style="left:2105.2px;top:895px;font-size:16.48px;color:#555a5e;letter-spacing:0.05px;"><i></i>22&#x27; 4 &quot;</span><span class="t" style="left:2008.9px;top:934px;font-size:18.03px;color:#474c50;font-weight:700;letter-spacing:-0.10px;"><i></i>Relays:</span>
<div class="a panel pmap"><div class="a ph"></div></div><span class="t" style="left:344.1px;top:959px;font-size:24.72px;color:#e6eceb;letter-spacing:0.73px;"><i></i>Map</span><svg style="left:1909.8000000000002px;top:1036.9px" width="30.2" height="30.2" viewBox="-15.1 -15.1 30.2 30.2"><circle r="15.05" fill="#d2d5d6"/><circle r="7" fill="#fff"/><polygon points="-2.6,-1.2 2.6,-1.2 0,2.6" fill="#8b9094"/></svg><svg style="left:318px;top:1078.9px" width="1650" height="411.9" viewBox="318 1078.9 1650 411.9"><defs><clipPath id="mapclip"><path d="M318,1078.9 H1968 V1478.8 a12,12 0 0 1 -12,12 H330 a12,12 0 0 1 -12,-12Z"/></clipPath><pattern id="flat" width="22" height="11" patternUnits="userSpaceOnUse"><rect width="22" height="11" fill="#d9e4e2"/><rect x="2" y="2" width="9" height="2.2" fill="#cfd6d8"/><rect x="13" y="7.5" width="8" height="2.2" fill="#cfd6d8"/></pattern><pattern id="marsh" width="20" height="10" patternUnits="userSpaceOnUse"><rect width="20" height="10" fill="#e4edeb"/><rect x="1" y="2" width="8" height="2" fill="#f1f4f2"/><rect x="11" y="7" width="8" height="2" fill="#f1f4f2"/></pattern><pattern id="town" width="9" height="9" patternUnits="userSpaceOnUse"><rect width="9" height="9" fill="#eaefee"/><path d="M0,0H9M0,0V9" stroke="#dde6e5" stroke-width="1.6"/></pattern></defs><g clip-path="url(#mapclip)"><rect x="318" y="1078.9" width="1650" height="411.9" fill="#f5f6f4"/><path d="M327.7,1078 V1341 H343.5 V1492" fill="none" stroke="#d3e3e0" stroke-width="5"/><path d="M352,1492 C350,1450 372,1405 400,1398 C420,1420 455,1418 470,1440 C480,1460 476,1480 480,1492Z" fill="#f3f5f3" stroke="#e6eeec" stroke-width="1.2" stroke-dasharray="3 3"/><path d="M790.3,1078 V1492" stroke="#dfe6e5" stroke-width="1.6" stroke-dasharray="9 3 2 3"/><path d="M1010,1175 H1075 V1232 H1118 V1262 H1150 V1330 L1120,1400 L1098,1448 H1018 V1330 H1000 V1262 H1010Z" fill="url(#town)"/><rect x="1024" y="1240" width="40" height="62" fill="#fbfcfb"/><rect x="1094" y="1208" width="18" height="12" fill="#dfe8e6"/><rect x="1052" y="1300" width="22" height="14" fill="#dde8e5"/><rect x="1088" y="1296" width="34" height="30" fill="#e2eae8"/><path d="M1175,1078 L1215,1078 C1262,1110 1292,1150 1302,1205 C1310,1262 1296,1310 1290,1345 L1230,1345 C1236,1300 1252,1262 1246,1215 C1240,1165 1212,1120 1175,1078Z" fill="#e2ecea"/><path d="M1246,1150 C1285,1170 1312,1210 1300,1262 C1290,1300 1262,1318 1244,1340 L1222,1340 C1228,1290 1240,1230 1246,1150Z" fill="#eef2f0"/><path d="M1048,1492 C1050,1458 1062,1436 1082,1426 L1128,1424 C1160,1424 1196,1408 1212,1380 C1232,1352 1262,1346 1300,1342 C1330,1338 1360,1322 1392,1326 L1460,1330 C1500,1338 1540,1350 1560,1380 C1574,1400 1582,1424 1584,1412 C1596,1396 1612,1402 1630,1410 C1650,1430 1664,1462 1676,1492Z" fill="#dbe8e5"/><path d="M1300,1345 C1330,1338 1365,1322 1395,1326 L1412,1368 L1458,1338 L1492,1336 L1540,1352 L1560,1382 L1582,1426 L1604,1402 L1632,1412 L1662,1458 L1640,1452 C1600,1428 1560,1462 1520,1466 C1480,1470 1450,1462 1420,1480 L1392,1492 L1240,1492 C1250,1440 1268,1392 1300,1345Z" fill="url(#flat)"/><path d="M1340,1340 L1396,1326 L1412,1368 L1458,1338 L1492,1336 L1540,1352 L1556,1382 L1500,1410 L1420,1412 L1362,1396Z" fill="url(#marsh)"/><rect x="1108" y="1436" width="7" height="40" fill="#f1f5f3" transform="rotate(-8 1108 1436)"/><rect x="1126" y="1436" width="7" height="40" fill="#f1f5f3" transform="rotate(-8 1126 1436)"/><rect x="1148" y="1436" width="7" height="40" fill="#f1f5f3" transform="rotate(-8 1148 1436)"/><rect x="1170" y="1436" width="7" height="40" fill="#f1f5f3" transform="rotate(-8 1170 1436)"/><rect x="1196" y="1436" width="7" height="40" fill="#f1f5f3" transform="rotate(-8 1196 1436)"/><path d="M1366,1078 C1372,1100 1374,1118 1392,1128 C1412,1140 1398,1166 1390,1190 C1384,1212 1408,1222 1400,1246 C1396,1266 1420,1300 1437,1327 C1425,1345 1414,1362 1414,1400" fill="none" stroke="#d3e3e0" stroke-width="3.4"/><path d="M1330,1193 C1352,1204 1368,1202 1376,1222 C1386,1262 1396,1300 1437,1327" fill="none" stroke="#d3e3e0" stroke-width="3.2"/><path d="M1336,1196 L1470,1320 L1492,1340.2 H1718" fill="none" stroke="#d8e4e2" stroke-width="2" stroke-dasharray="10 3 2 3"/><path d="M1486,1078 V1105.4 H1718.6 V1492" fill="none" stroke="#d3e3e0" stroke-width="3.6"/><path d="M1255,1078 C1290,1088 1330,1092 1362,1108 C1392,1124 1420,1118 1452,1113 C1480,1116 1498,1140 1512,1156 C1534,1184 1544,1212 1553,1230 C1570,1262 1584,1280 1592,1297 C1606,1330 1616,1362 1629,1388 C1640,1408 1660,1414 1675,1422 C1690,1436 1694,1454 1700,1468 C1706,1480 1714,1488 1722,1494" fill="none" stroke="#dbe7e5" stroke-width="5"/><path d="M1255,1078 C1290,1088 1330,1092 1362,1108 C1392,1124 1420,1118 1452,1113 C1480,1116 1498,1140 1512,1156 C1534,1184 1544,1212 1553,1230 C1570,1262 1584,1280 1592,1297 C1606,1330 1616,1362 1629,1388 C1640,1408 1660,1414 1675,1422 C1690,1436 1694,1454 1700,1468 C1706,1480 1714,1488 1722,1494" fill="none" stroke="#fafbfa" stroke-width="2.6"/><path d="M1262,1150 L1368,1362" stroke="#d3d8da" stroke-width="9" opacity="0.8"/><path d="M1212,1208 L1226,1352" stroke="#d6dbdc" stroke-width="7" opacity="0.8"/><path d="M1259.6,1078 L1142,1286 C1120,1325 1100,1362 1090,1384 C1074,1420 1062,1450 1056,1492" fill="none" stroke="#c3c7ca" stroke-width="5.4"/><path d="M1259.6,1078 L1142,1286 C1120,1325 1100,1362 1090,1384 C1074,1420 1062,1450 1056,1492" fill="none" stroke="#e4e2dc" stroke-width="1.6"/><path d="M1262,1078 L1176,1262 C1160,1300 1156,1340 1164,1380 C1170,1410 1180,1440 1186,1470" fill="none" stroke="#cfd4d6" stroke-width="3.4"/><path d="M1196,1212 C1186,1262 1176,1330 1192,1392 L1204,1436" fill="none" stroke="#d7dcdd" stroke-width="3"/><rect x="1086" y="1327.6" width="45.6" height="22.6" rx="3" fill="#f8f8f6" stroke="#dcdfdf" stroke-width="1.4"/><text x="1108.8" y="1344.5" font-family="Liberation Sans" font-weight="700" font-size="13.5" fill="#cdb59a" text-anchor="middle">AK 9</text><g font-family="Liberation Sans" font-size="13.5" fill="#c6bfb6" text-anchor="middle"><text x="647.5" y="1089">Mount</text><text x="647.5" y="1105">Benson</text><text x="647.5" y="1121.5">1346 m</text></g><g font-family="Liberation Sans" font-style="italic" font-size="13.5" fill="#c9d0d2" text-anchor="middle"><text x="1241" y="1317">Seward</text><text x="1241" y="1333.5">Airport</text></g><text font-family="Liberation Sans" font-style="italic" font-size="13" fill="#c5d3d1" transform="translate(1178,1090) rotate(33)">Resurrection River</text><text font-family="Liberation Sans" font-size="11.5" fill="#d1b89c" transform="translate(1066,1444) rotate(-62)">Seward Highway</text><text font-family="Liberation Sans" font-weight="700" font-size="11" fill="#d1dbda" transform="translate(1504,1097) rotate(-80)">1st</text><circle cx="1142.5" cy="1249" r="16.6" fill="#84888d" stroke="#c4c7ca" stroke-width="3.4"/><g><path d="M1081,1121.2 H1197.4 a12,12 0 0 1 12,12 V1192.2 a12,12 0 0 1 -12,12 H1153.2 L1139.4,1218.6 L1125.6,1204.2 H1081 a12,12 0 0 1 -12,-12 V1133.2 a12,12 0 0 1 12,-12Z" fill="#d9dddf" opacity="0.55" transform="translate(0,3)"/><path d="M1081,1119.2 H1197.4 a12,12 0 0 1 12,12 V1192.2 a12,12 0 0 1 -12,12 H1153.2 L1139.4,1218.6 L1125.6,1204.2 H1081 a12,12 0 0 1 -12,-12 V1131.2 a12,12 0 0 1 12,-12Z" fill="#fff"/><path d="M1188.6,1130.2 L1198.6,1140.2 M1198.6,1130.2 L1188.6,1140.2" stroke="#c4c8ca" stroke-width="1.8"/></g></g></svg><span class="t" style="left:1095.9px;top:1056px;font-size:16.4px;color:#7d8689;letter-spacing:0.03px;"><i></i>Main Street</span><span class="t" style="left:1095.9px;top:1079px;font-size:16.4px;color:#7d8689;letter-spacing:0.05px;"><i></i>MP:55.9.</span><div class="a pill"></div><span class="t" style="left:1048.8px;top:1175px;font-size:16.2px;color:#c3c8cb;letter-spacing:0.19px;"><i></i>CLICK TO UNLOCK MAP</span><div class="a zoomc"></div><div class="a" style="left:334.6px;top:1134.7px;width:40px;height:1.3px;background:#d6e2e0"></div><svg style="left:347px;top:1106.9px" width="17" height="16.4" viewBox="0 0 17 16.4"><path d="M0,8H17" stroke="#646a74" stroke-width="2.2"/><path d="M8.4,0V16.2" stroke="#646a74" stroke-width="3"/></svg><svg style="left:348px;top:1154.9px" width="14.2" height="2.3" viewBox="0 0 14.2 2.3"><rect width="14.2" height="2.3" fill="#646a74"/></svg>
<div class="a panel pph"><div class="a ph"></div></div><span class="t" style="left:2021.9px;top:1046px;font-size:24.72px;color:#e6eceb;letter-spacing:-0.02px;"><i></i>Photos</span><svg style="left:2748.8px;top:1125.1000000000001px" width="30.2" height="30.2" viewBox="-15.1 -15.1 30.2 30.2"><circle r="15.05" fill="#d2d5d6"/><polygon points="0,-7.6 2.6,-4.2 -2.6,-4.2" fill="#fff" transform="rotate(0)"/><polygon points="0,-7.6 2.6,-4.2 -2.6,-4.2" fill="#fff" transform="rotate(90)"/><polygon points="0,-7.6 2.6,-4.2 -2.6,-4.2" fill="#fff" transform="rotate(180)"/><polygon points="0,-7.6 2.6,-4.2 -2.6,-4.2" fill="#fff" transform="rotate(270)"/></svg><div class="a cambtn"></div><svg style="left:2362px;top:1202px" width="70" height="56" viewBox="2362 1202 70 56"><path fill="#34999e" d="M2363.2,1219.5 q0,-2.6 2.4,-3.2 l3,-0.6 v-1.2 h6.6 v1.4 l5.4,-0.2 l4.6,-8 q0.6,-1 1.8,-1 h14.6 q1.2,0 1.8,1 l3.6,7.8 h19.6 q2.4,0 2.4,2.6 v33.8 q0,2.8 -2.8,2.8 h-60.2 q-2.8,0 -2.8,-2.8Z"/><rect x="2389.5" y="1206.6" width="13" height="2.2" fill="#d6dadc"/><rect x="2363.2" y="1223.4" width="66" height="1.5" fill="#d6dadc" opacity="0.9"/><circle cx="2396" cy="1237.6" r="17.4" fill="#34999e"/><circle cx="2396" cy="1237.6" r="15.6" fill="none" stroke="#d6dadc" stroke-width="3"/><circle cx="2396" cy="1237.6" r="10.2" fill="#d6dadc"/><path d="M2389.6,1237 a6.6,6.6 0 0 1 5.4,-6" fill="none" stroke="#34999e" stroke-width="1.3"/></svg><svg style="left:2016.2px;top:1295px" width="380.8" height="205" viewBox="0 0 380.8 205"><defs><clipPath id="p1c"><rect width="380.8" height="230" rx="10"/></clipPath><filter id="bl1" x="-5%" y="-5%" width="110%" height="110%"><feGaussianBlur stdDeviation="1.6"/></filter><linearGradient id="strip" x1="0" x2="1"><stop offset="0" stop-color="#7f7562"/><stop offset="0.1" stop-color="#9ea2a6"/><stop offset="0.3" stop-color="#a9acb0"/><stop offset="0.42" stop-color="#8e9197"/><stop offset="0.5" stop-color="#c3ad8f"/><stop offset="0.62" stop-color="#b9a68d"/><stop offset="0.72" stop-color="#9fa3a8"/><stop offset="0.8" stop-color="#e9eded"/><stop offset="1" stop-color="#fdfefe"/></linearGradient></defs><g clip-path="url(#p1c)"><g filter="url(#bl1)"><rect x="-10" y="-10" width="400.8" height="225" fill="#535a60"/><rect x="0.0" y="0.0" width="77.6" height="18.3" fill="#4b5258"/><rect x="79.2" y="0.0" width="67.5" height="18.3" fill="#c4a583"/><rect x="161.5" y="0.0" width="10.9" height="18.3" fill="#bfa281"/><rect x="180.9" y="2.8" width="19.4" height="12.4" fill="#c2a481"/><rect x="173.9" y="0.0" width="31.1" height="19.9" fill="#363d45" opacity="0.55"/><rect x="180.9" y="2.8" width="19.4" height="11.6" fill="#c4a684"/><rect x="206.5" y="0.0" width="79.2" height="18.3" fill="#8c8373"/><rect x="215.8" y="2.8" width="26.4" height="14.0" fill="#3d444b" opacity="0.8"/><rect x="254.7" y="2.8" width="23.3" height="14.0" fill="#3a4148" opacity="0.8"/><rect x="0.0" y="23.0" width="55.9" height="80.0" fill="#828894"/><rect x="28.0" y="57.1" width="28.0" height="45.8" fill="#9a9fa8" opacity="0.7"/><rect x="55.9" y="50.9" width="18.6" height="51.2" fill="#8f949c" opacity="0.8"/><rect x="0.0" y="103.7" width="74.5" height="68.3" fill="#2b323b"/><rect x="55.9" y="147.2" width="46.6" height="21.7" fill="#333a42"/><rect x="80.7" y="35.7" width="66.0" height="24.5" fill="#a19c93"/><rect x="93.2" y="46.3" width="52.8" height="13.2" fill="#b9a186" opacity="0.8"/><rect x="163.4" y="35.7" width="119.6" height="24.5" fill="#8f8068"/><rect x="164.6" y="46.3" width="108.7" height="12.4" fill="#b79f83" opacity="0.75"/><rect x="164.6" y="35.7" width="118.3" height="5.9" fill="#9b9a98" opacity="0.7"/><rect x="97.8" y="76.1" width="50.0" height="37.0" fill="#a8acb1"/><rect x="105.6" y="94.4" width="40.4" height="15.5" fill="#c0b5a6" opacity="0.6"/><rect x="163.4" y="75.8" width="37.0" height="6.2" fill="#9c9fa3"/><rect x="250.0" y="75.8" width="32.9" height="6.2" fill="#9a8d78"/><rect x="179.3" y="82.8" width="119.6" height="81.5" fill="#2c333c"/><rect x="163.8" y="78.9" width="16.3" height="31.1" fill="#7d838a" opacity="0.9"/><rect x="83.9" y="127.3" width="104.8" height="54.8" fill="#a9adb2"/><rect x="164.6" y="109.9" width="15.5" height="40.4" fill="#a3a6aa" opacity="0.9"/><rect x="102.5" y="137.9" width="74.5" height="41.9" fill="#c1c4c6" opacity="0.6"/><rect x="188.7" y="163.5" width="95.8" height="15.5" fill="#8d7d65"/><rect x="188.7" y="172.0" width="38.0" height="10.1" fill="#a1a5aa" opacity="0.8"/><rect x="0.0" y="173.6" width="60.6" height="31.4" fill="#6b727b"/><rect x="3.1" y="181.4" width="49.7" height="23.6" fill="#4d545b" opacity="0.7"/><rect x="80.7" y="185.2" width="220.5" height="10.1" fill="#3f464e"/><rect x="102.5" y="196.1" width="215.8" height="8.9" fill="#8a8f96" opacity="0.75"/><rect x="301.2" y="0.0" width="17.9" height="205.0" fill="#7f7461"/><rect x="285.7" y="19.9" width="16.3" height="173.9" fill="#495057"/><rect x="318.3" y="0.0" width="62.4" height="205.0" fill="url(#strip)"/></g></g></svg><svg style="left:2405.1px;top:1295px" width="381.1" height="205" viewBox="0 0 381.1 205"><defs><clipPath id="p2c"><rect width="381.1" height="230" rx="10"/></clipPath><filter id="bl2" x="-5%" y="-5%" width="110%" height="110%"><feGaussianBlur stdDeviation="1.5"/></filter><linearGradient id="sky" x1="0" y1="0" x2="0" y2="1"><stop offset="0" stop-color="#8b909a"/><stop offset="0.55" stop-color="#9297a0"/><stop offset="1" stop-color="#a4a8ae"/></linearGradient><linearGradient id="skyr" x1="0" x2="1"><stop offset="0" stop-color="#7a808c" stop-opacity="0"/><stop offset="1" stop-color="#737987" stop-opacity="0.9"/></linearGradient></defs><g clip-path="url(#p2c)"><g filter="url(#bl2)"><rect x="-10" y="-10" width="401.1" height="225" fill="url(#sky)"/><rect x="250" width="131.1" height="120" fill="url(#skyr)"/><rect y="75" width="200" height="45" fill="#a3a7ad" opacity="0.7"/><ellipse cx="180" cy="26" rx="60" ry="30" fill="#9ea2a9" opacity="0.3"/><polygon points="0.0,119.3 150.2,116.1 212.3,119.3 381.1,134.8 381.1,205.0 0.0,205.0" fill="#8a7d66"/><polygon points="153.3,127.0 179.7,127.0 258.9,205.0 0.0,205.0 0.0,165.8 72.5,147.2" fill="#9da1a6"/><polygon points="165.7,130.1 181.2,131.7 313.2,186.0 321.0,205.0 212.3,205.0" fill="#a8a49c" opacity="0.9"/><polygon points="137.7,144.1 173.4,144.1 201.4,205.0 81.8,205.0" fill="#857a66"/><polygon points="0.0,178.3 103.6,162.7 81.8,205.0 0.0,205.0" fill="#8f8e8a" opacity="0.8"/><polygon points="134.6,144.1 139.3,144.1 94.3,205.0 84.9,205.0" fill="#c9ab84" opacity="0.9"/><polygon points="179.7,159.6 183.5,159.6 207.6,205.0 199.8,205.0" fill="#c4c8cc" opacity="0.9"/><polygon points="5.7,86.6 30.6,85.1 41.5,96.0 66.3,97.5 78.7,119.3 81.8,134.8 41.5,144.1 8.9,139.4" fill="#323a43"/><polygon points="109.0,127.0 123.0,90.5 136.2,127.0 135.4,131.7 109.0,131.7" fill="#2d353e"/><polygon points="81.8,116.1 156.4,114.6 156.4,127.0 81.8,131.7" fill="#5a5d59" opacity="0.8"/><polygon points="203.0,108.4 218.5,88.2 249.5,82.8 272.8,94.4 274.4,134.8 224.7,137.9 203.0,128.6" fill="#545a5b"/><polygon points="218.5,103.7 243.3,94.4 258.9,113.0 243.3,131.7 220.0,127.0" fill="#7a7364" opacity="0.6"/><polygon points="283.7,88.2 314.8,77.3 352.0,82.0 381.1,64.9 381.1,151.9 286.8,150.3" fill="#4a5156"/><polygon points="302.3,106.8 336.5,102.2 352.0,134.8 305.4,142.5" fill="#857a64" opacity="0.75"/><polygon points="283.7,150.3 381.1,150.3 381.1,205.0 321.0,205.0 289.9,173.6" fill="#80755f"/><polygon points="313.2,173.6 352.0,165.8 381.1,189.1 381.1,205.0 328.7,205.0" fill="#5d6162" opacity="0.6"/><polygon points="128.4,69.6 272.8,71.9 272.8,75.8 128.4,73.4" fill="#9a9ea5" opacity="0.8"/><polygon points="274.4,52.5 283.7,52.5 282.1,168.9 274.4,168.9" fill="#a0a4aa" opacity="0.85"/><ellipse cx="137.0" cy="63.4" rx="5" ry="6.6" fill="#2f3740"/><ellipse cx="152.5" cy="63.4" rx="5" ry="6.6" fill="#2f3740"/><ellipse cx="102.0" cy="82.0" rx="4" ry="3.6" fill="#363e46"/><ellipse cx="111.3" cy="82.0" rx="4" ry="3.6" fill="#363e46"/><path d="M272.0,94.4 l12,13 m0,-13 l-12,13" stroke="#c8cbd0" stroke-width="3"/><polygon points="258.9,0.0 263.5,0.0 263.5,88.2 258.9,88.2" fill="#7d838e" opacity="0.6"/><polygon points="1.1,63.4 8.9,63.4 8.9,150.3 1.1,150.3" fill="#868b93" opacity="0.7"/></g></g></svg>
</body></html>
